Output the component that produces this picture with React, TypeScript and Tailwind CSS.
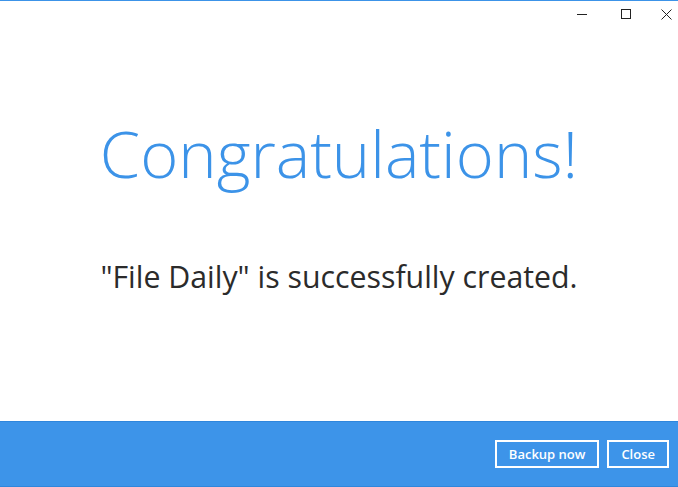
export default function App() {
  return (
    <div className="w-[678px] h-[487px] flex flex-col bg-white border-t border-[#3c93e8] font-['Open_Sans',sans-serif] overflow-hidden">
      <div className="h-[28px] flex justify-end items-start text-[#222]">
        <button className="w-[32px] h-[26px] flex items-center justify-center">
          <svg width="10" height="10" viewBox="0 0 10 10">
            <path d="M0 5.5h10" stroke="#222" strokeWidth="1" />
          </svg>
        </button>
        <button className="w-[56px] h-[26px] flex items-center justify-center">
          <svg width="10" height="10" viewBox="0 0 10 10">
            <rect x="0.5" y="0.5" width="9" height="9" fill="none" stroke="#222" strokeWidth="1" />
          </svg>
        </button>
        <button className="w-[24px] h-[26px] flex items-center justify-center">
          <svg width="11" height="11" viewBox="0 0 11 11">
            <path d="M0.5 0.5l10 10M10.5 0.5l-10 10" stroke="#222" strokeWidth="1" />
          </svg>
        </button>
      </div>
      <div className="flex-1 flex flex-col items-center">
        <h1 className="mt-[92px] text-[65px] leading-none font-light text-[#3c93e8]">
          Congratulations!
        </h1>
        <p className="mt-[76px] text-[30.3px] leading-none text-[#2b2b2b]">
          "File Daily" is successfully created.
        </p>
      </div>
      <div className="h-[66px] bg-[#3d94e9] border-t border-[#2f86dc] border-b border-b-[#2f86dc] flex items-center justify-end gap-[8px] pr-[9px]">
        <button className="h-[28px] px-[12px] border-2 border-white text-white text-[13px] font-semibold leading-none">
          Backup now
        </button>
        <button className="h-[28px] px-[12px] border-2 border-white text-white text-[13px] font-semibold leading-none">
          Close
        </button>
      </div>
    </div>
  );
}
